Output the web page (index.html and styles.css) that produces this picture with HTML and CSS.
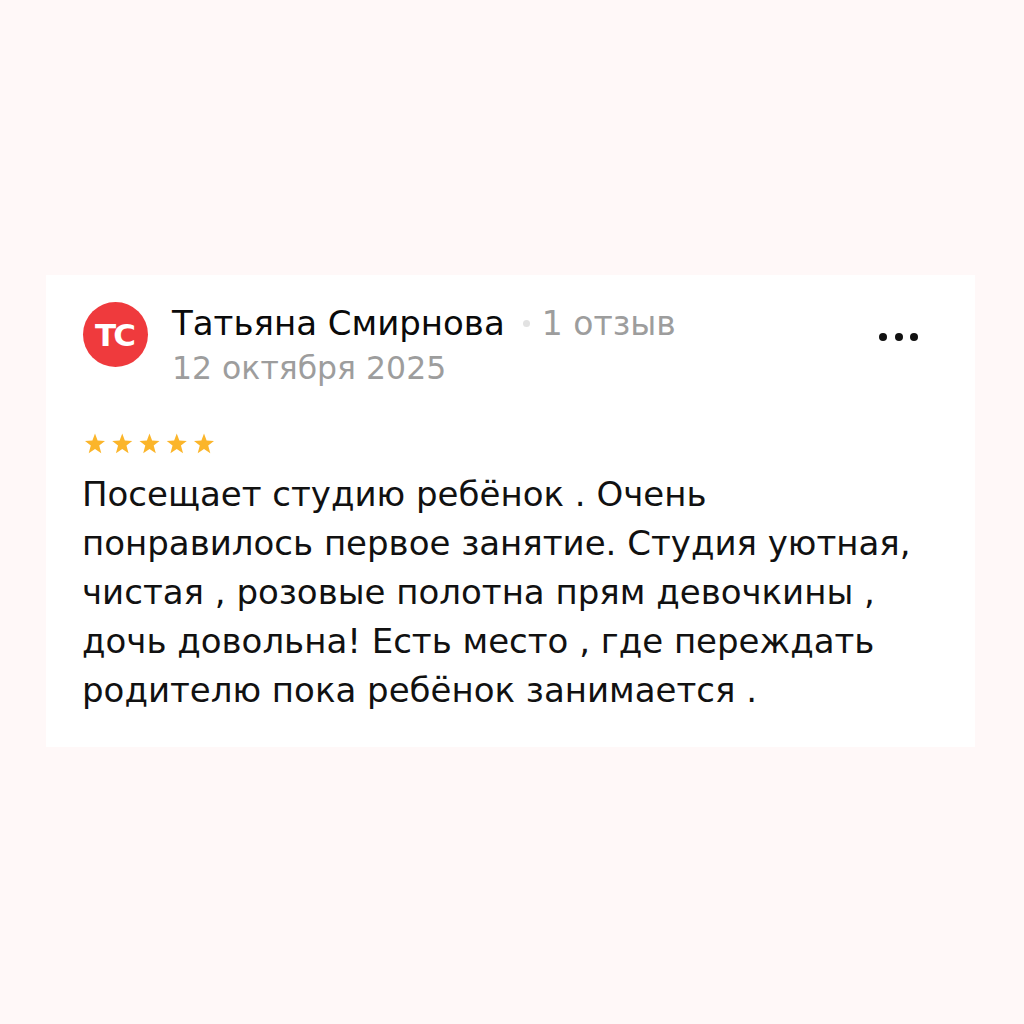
FILE: index.html
```html
<!DOCTYPE html>
<html lang="ru">
<head>
<meta charset="utf-8">
<title>Отзыв</title>
<link rel="stylesheet" href="styles.css">
</head>
<body>
<div class="page">
  <div class="card">
    <div class="header">
      <div class="avatar">TC</div>
      <div class="meta">
        <div class="line1"><span class="name">Татьяна Смирнова</span><span class="dot"></span><span class="count">1 отзыв</span></div>
        <div class="date">12 октября 2025</div>
      </div>
      <div class="more"><span></span><span></span><span></span></div>
    </div>
    <div class="stars">
      <svg viewBox="0 0 132 22" width="132" height="22">
        <defs><polygon id="s" points="11,0.5 13.6,7.6 21,7.9 15.2,12.6 17.3,20.3 11,16 4.7,20.3 6.8,12.6 1,7.9 8.4,7.6"/></defs>
        <use href="#s" x="0" fill="#fbb52a"/>
        <use href="#s" x="27.25" fill="#fbb52a"/>
        <use href="#s" x="54.5" fill="#fbb52a"/>
        <use href="#s" x="81.75" fill="#fbb52a"/>
        <use href="#s" x="109" fill="#fbb52a"/>
      </svg>
    </div>
    <p class="text">Посещает студию ребёнок . Очень<br>понравилось первое занятие. Студия уютная,<br>чистая , розовые полотна прям девочкины ,<br>дочь довольна! Есть место , где переждать<br>родителю пока ребёнок занимается .</p>
  </div>
</div>
</body>
</html>
```
FILE: styles.css
```css
html, body {
  margin: 0;
  padding: 0;
  background: #fff8f8;
}
.page {
  width: 1024px;
  height: 1024px;
  padding: 275px 0 0 46px;
  box-sizing: border-box;
}
.card {
  width: 929px;
  height: 472px;
  background: #ffffff;
  box-sizing: border-box;
  padding: 27px 57px 0 36px;
  font-family: "DejaVu Sans", sans-serif;
}
.header {
  display: flex;
  align-items: flex-start;
}
.avatar {
  width: 65px;
  height: 65px;
  border-radius: 50%;
  background: #ef3a3d;
  color: #fff;
  font-family: "DejaVu Sans", sans-serif;
  font-weight: bold;
  font-size: 31px;
  letter-spacing: -3px;
  text-indent: -3px;
  display: flex;
  align-items: center;
  justify-content: center;
  flex: none;
  margin-left: 1px;
}
.meta {
  margin-left: 24px;
  flex: 1;
}
.line1 {
  display: flex;
  align-items: center;
  height: 44px;
  margin-top: -1px;
}
.name {
  font-size: 34px;
  color: #0a0a0a;
}
.dot {
  width: 7px;
  height: 7px;
  border-radius: 50%;
  background: #e2e2e2;
  margin: 0 12px 0 18px;
}
.count {
  font-size: 33px;
  color: #9d9d9d;
}
.date {
  font-size: 31.5px;
  color: #9d9d9d;
  line-height: 46px;
}
.more {
  display: flex;
  gap: 7.5px;
  margin-top: 31px;
}
.more span {
  width: 8px;
  height: 8px;
  border-radius: 50%;
  background: #111;
}
.stars {
  margin-top: 42px;
  height: 22px;
  padding-left: 2px;
}
.stars svg { display: block; }
.text {
  margin: 15px 0 0 0;
  font-size: 34px;
  line-height: 49px;
  color: #111;
  white-space: nowrap;
}
```
